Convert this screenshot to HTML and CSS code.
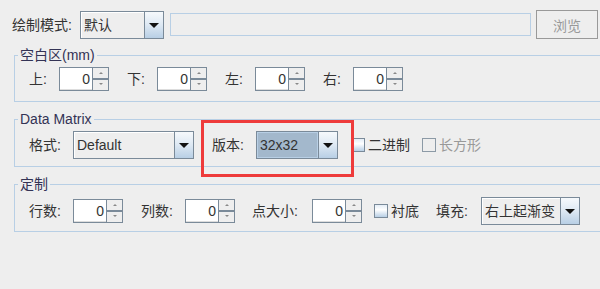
FILE: index.html
```html
<!DOCTYPE html>
<html lang="zh-CN">
<head>
    <meta charset="UTF-8">
    <title>Data Matrix 设置</title>
    <link rel="stylesheet" href="styles.css">
</head>
<body>

    <div class="top-row">
        <span class="label mode-label">绘制模式:</span>
        <div class="combo combo-mode">
            <span class="combo-value">默认</span>
            <span class="combo-arrow"></span>
        </div>
        <div class="path-field"></div>
        <button class="browse-btn" disabled>浏览</button>
    </div>

    <div class="group group-margin">
        <span class="group-title">空白区(mm)</span>
        <div class="row">
            <span class="label w30">上:</span>
            <div class="spinner"><span class="spinner-value">0</span><span class="spinner-buttons"><span class="spin up"></span><span class="spin down"></span></span></div>
            <span class="label w30">下:</span>
            <div class="spinner"><span class="spinner-value">0</span><span class="spinner-buttons"><span class="spin up"></span><span class="spin down"></span></span></div>
            <span class="label w30">左:</span>
            <div class="spinner"><span class="spinner-value">0</span><span class="spinner-buttons"><span class="spin up"></span><span class="spin down"></span></span></div>
            <span class="label w30">右:</span>
            <div class="spinner"><span class="spinner-value">0</span><span class="spinner-buttons"><span class="spin up"></span><span class="spin down"></span></span></div>
        </div>
    </div>

    <div class="group group-matrix">
        <span class="group-title">Data Matrix</span>
        <div class="row">
            <span class="label w44">格式:</span>
            <div class="combo combo-format">
                <span class="combo-value">Default</span>
                <span class="combo-arrow"></span>
            </div>
            <span class="label w44 gap-left">版本:</span>
            <div class="combo combo-version focused">
                <span class="combo-value">32x32</span>
                <span class="combo-arrow"></span>
            </div>
            <label class="check-item binary"><span class="check"></span>二进制</label>
            <label class="check-item disabled"><span class="check"></span>长方形</label>
        </div>
        <div class="highlight"></div>
    </div>

    <div class="group group-custom">
        <span class="group-title">定制</span>
        <div class="row">
            <span class="label w44">行数:</span>
            <div class="spinner"><span class="spinner-value">0</span><span class="spinner-buttons"><span class="spin up"></span><span class="spin down"></span></span></div>
            <span class="label w44">列数:</span>
            <div class="spinner"><span class="spinner-value">0</span><span class="spinner-buttons"><span class="spin up"></span><span class="spin down"></span></span></div>
            <span class="label w60 tight">点大小:</span>
            <div class="spinner last"><span class="spinner-value">0</span><span class="spinner-buttons"><span class="spin up"></span><span class="spin down"></span></span></div>
            <label class="check-item"><span class="check"></span>衬底</label>
            <span class="label w45 fill-label">填充:</span>
            <div class="combo combo-fill">
                <span class="combo-value">右上起渐变</span>
                <span class="combo-arrow"></span>
            </div>
        </div>
    </div>

</body>
</html>
```

FILE: styles.css
```css
/* styles.css */
body {
    margin: 0;
    background-color: #eeeeee;
    font-family: "Liberation Sans", "Noto Sans CJK SC", sans-serif;
    font-size: 14px;
    color: #333333;
    overflow: hidden;
}

.top-row {
    display: flex;
    align-items: center;
    padding: 10px 0 0 12px;
    height: 29px;
}

.label {
    display: inline-block;
    white-space: nowrap;
    line-height: 16px;
}

.mode-label { width: 68px; }
.w30 { width: 30px; }
.w44 { width: 44px; }
.w45 { width: 45px; }
.w60 { width: 60px; }

/* combo boxes */
.combo {
    display: flex;
    box-sizing: border-box;
    height: 28px;
    border: 1px solid #7a8a99;
    background-color: #eeeeee;
}

.combo-value {
    flex: 1;
    padding-left: 3px;
    line-height: 26px;
    box-shadow: inset 1px 1px #ffffff;
    white-space: nowrap;
    overflow: hidden;
}

.combo-arrow {
    position: relative;
    width: 18px;
    border-left: 1px solid #7a8a99;
    background: linear-gradient(#f6f9fc, #dde8f3 50%, #b8cfe5);
}

.combo-arrow::after {
    content: "";
    position: absolute;
    left: 4px;
    top: 11px;
    border-left: 5px solid transparent;
    border-right: 5px solid transparent;
    border-top: 5px solid #111111;
}

.combo-mode { width: 84px; }
.combo-format { width: 121px; }
.combo-version { width: 82px; }
.combo-fill { width: 99px; }

.combo.focused .combo-value {
    background-color: #a3b8cc;
    box-shadow: inset 0 0 0 1px #b8cfe5;
}

.path-field {
    box-sizing: border-box;
    width: 361px;
    height: 23px;
    margin-left: 6px;
    border: 1px solid #b8cfe5;
}

.browse-btn {
    box-sizing: border-box;
    width: 62px;
    height: 29px;
    margin-left: 5px;
    padding: 0;
    border: 1px solid #999999;
    background-color: #eeeeee;
    color: #999999;
    font-family: inherit;
    font-size: 14px;
}

/* titled groups */
.group {
    position: relative;
    margin: 17px -10px 0 14px;
    border: 1px solid #b8cfe5;
    padding: 11px 0 7px 14px;
}

.group-margin {
    margin-top: 16px;
    padding-bottom: 10px;
}

.group-custom {
    padding-top: 12px;
    padding-bottom: 6px;
}

.group-title {
    position: absolute;
    top: -9px;
    left: 3px;
    padding: 0 2px;
    line-height: 16px;
    background-color: #eeeeee;
    color: #333355;
}

.row {
    display: flex;
    align-items: center;
    min-height: 24px;
}

.group-matrix .row,
.group-custom .row {
    height: 28px;
}

/* spinners */
.spinner {
    display: flex;
    box-sizing: border-box;
    width: 50px;
    height: 24px;
    margin-right: 18px;
    border: 1px solid #7a8a99;
}

.spinner.last { margin-right: 12px; }

.spinner-value {
    flex: 1;
    background-color: #ffffff;
    text-align: right;
    padding-right: 2px;
    line-height: 22px;
    border-bottom: 1px solid #dddddd;
}

.spinner-buttons {
    display: flex;
    flex-direction: column;
    width: 15px;
    border-left: 1px solid #7a8a99;
}

.spin {
    position: relative;
    flex: 1;
    background-color: #eeeeee;
}

.spin.up { border-bottom: 2px solid #7a8a99; }

.spin::after {
    content: "";
    position: absolute;
    left: 6px;
    top: 4px;
    border-left: 2px solid transparent;
    border-right: 2px solid transparent;
}

.spin.up::after { border-bottom: 2px solid #888888; }
.spin.down::after { border-top: 2px solid #888888; top: 3px; }

.gap-left { margin-left: 18px; }
.tight { margin-left: -1px; }

/* check boxes */
.check-item {
    display: flex;
    align-items: center;
    line-height: 16px;
    white-space: nowrap;
}

.check {
    box-sizing: border-box;
    width: 14px;
    height: 14px;
    margin-right: 3px;
    border: 1px solid #7a8a99;
    background: linear-gradient(#e4edf6, #ffffff 40%, #b8cfe5);
}

.check-item.binary { margin-left: 13px; }

.check-item.disabled {
    margin-left: 12px;
    color: #999999;
}

.check-item.disabled .check {
    border-color: #8c9aa6;
    background: #eeeeee;
}

.fill-label { margin-left: 17px; }

/* red annotation frame */
.highlight {
    position: absolute;
    left: 186px;
    top: 0;
    width: 153px;
    height: 57px;
    box-sizing: border-box;
    border: 3px solid #ee3b3b;
}
```
